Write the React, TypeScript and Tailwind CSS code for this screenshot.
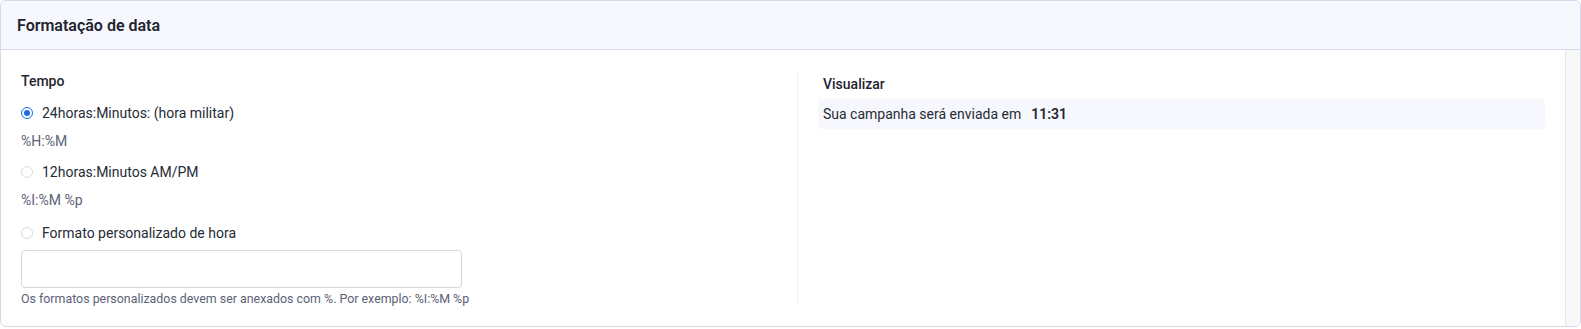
import React from 'react';

const FONT = { fontFamily: 'Roboto, "Noto Sans", Arial, sans-serif' };

function Radio({ checked }: { checked?: boolean }) {
  return checked ? (
    <span className="flex h-[12px] w-[12px] items-center justify-center rounded-full border border-[#1b6ae6] bg-white">
      <span className="h-[6px] w-[6px] rounded-full bg-[#1b6ae6]" />
    </span>
  ) : (
    <span className="h-[12px] w-[12px] rounded-full border border-[#d5d9e2] bg-white" />
  );
}

function Option({ label, checked }: { label: string; checked?: boolean }) {
  return (
    <label className="flex h-5 items-center gap-[9px] text-[14px] text-[#262b36]">
      <Radio checked={checked} />
      {label}
    </label>
  );
}

export default function App() {
  return (
    <div className="w-full bg-white" style={FONT}>
      <div className="flex h-[327px] flex-col overflow-hidden rounded-[6px] border border-[#d6dae6]">
        {/* Header */}
        <div className="flex h-[49px] shrink-0 items-center border-b border-[#d6dae6] bg-[#f7f8fd] px-4">
          <h2 className="pt-[2px] text-[16px] font-semibold text-[#1f2430]">Formatação de data</h2>
        </div>

        {/* Body */}
        <div className="flex flex-1">
          <div className="flex flex-1 pl-[20px] pt-[21px]">
            {/* Time */}
            <div className="flex w-[776px] shrink-0 flex-col">
              <div className="h-5 text-[14px] font-medium leading-5 text-[#1f2430]">Tempo</div>
              <div className="mt-[12px]">
                <Option label="24horas:Minutos: (hora militar)" checked />
              </div>
              <div className="mt-[8px] h-5 text-[14px] leading-5 text-[#5b6278]">%H:%M</div>
              <div className="mt-[11px]">
                <Option label="12horas:Minutos AM/PM" />
              </div>
              <div className="mt-[8px] h-5 text-[14px] leading-5 text-[#5b6278]">%I:%M %p</div>
              <div className="mt-[13px]">
                <Option label="Formato personalizado de hora" />
              </div>
              <input
                type="text"
                className="mt-[7px] h-[38px] w-[441px] rounded-[4px] border border-[#d3d7e1] bg-white px-3 text-[14px] outline-none"
              />
              <p className="mt-[3px] text-[12.4px] leading-4 text-[#5b6278]">
                Os formatos personalizados devem ser anexados com %. Por exemplo: %I:%M %p
              </p>
            </div>

            {/* Preview */}
            <div className="mb-[23px] mr-[20px] flex flex-1 flex-col border-l border-[#eeeff2] pl-[20px]">
              <div className="mt-[3px] h-5 pl-[5px] text-[14px] font-medium leading-5 text-[#1f2430]">Visualizar</div>
              <div className="mt-[5px] flex h-[30px] items-center rounded-[4px] bg-[#f7f8fd] px-[5px] text-[14px] text-[#262b36]">
                Sua campanha será enviada em
                <span className="ml-[10px] font-semibold text-[#1f2430]">11:31</span>
              </div>
            </div>
          </div>

          {/* Scrollbar track */}
          <div className="w-[15px] shrink-0 border-l border-[#e6e6e6] bg-[#f8f8f8]" />
        </div>
      </div>
    </div>
  );
}
